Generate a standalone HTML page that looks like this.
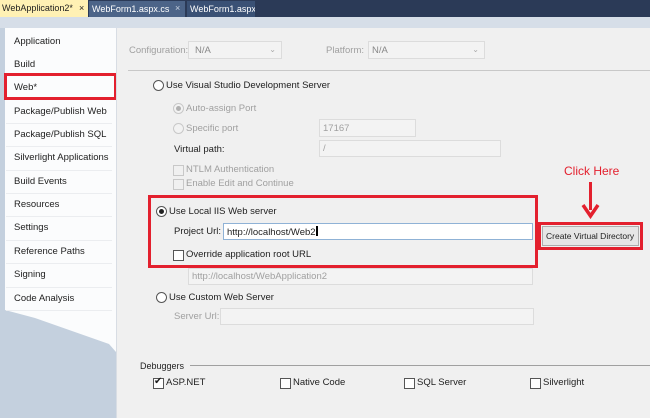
<!DOCTYPE html>
<html><head><meta charset="utf-8"><style>
*{margin:0;padding:0;box-sizing:border-box}
body{width:650px;height:418px;position:relative;overflow:hidden;background:#c4d0de;font-family:"Liberation Sans",sans-serif;font-size:9.5px;color:#1e1e1e}
.a{position:absolute;white-space:nowrap}
.g{color:#a0a0a0}
.box{position:absolute;background:#f3f3f3;border:1px solid #dcdcdc}
.rad{position:absolute;width:11px;height:11px;border-radius:50%;border:1px solid #555;background:#fff}
.rad.d{border-color:#c8c8c8;background:#f2f2f2}
.rad.on::after{content:"";position:absolute;left:2px;top:2px;width:5px;height:5px;border-radius:50%;background:#222}
.rad.d.on::after{background:#b0b0b0}
.chk{position:absolute;width:11px;height:11px;border:1px solid #555;background:#fff}
.chk.d{border-color:#c8c8c8;background:#f0f0f0}
.red{position:absolute;border:3px solid #e3202e}
.side div{position:absolute;left:14px;font-size:9.5px;color:#222}
.sep{position:absolute;left:6px;width:106px;height:1px;background:#ebedf0}
.tab{position:absolute;top:1px;height:16px;font-size:9px;overflow:hidden;padding-top:3px}
</style></head><body>
<div class="a" style="left:0;top:0;width:650px;height:17px;background:#2b3a57"></div>
<div class="tab" style="left:0;top:0;height:17px;width:88px;background:#fff1b4;color:#1e1e1e;padding-left:2px">WebApplication2*<span class="a" style="left:79px;top:3px">×</span></div>
<div class="tab" style="left:89px;width:96px;background:#4c6488;color:#fff;padding-left:3px">WebForm1.aspx.cs<span class="a" style="left:86px;top:2px;color:#c8d2e0">×</span></div>
<div class="tab" style="left:187px;width:68px;background:#3a5175;color:#fff;padding-left:3px">WebForm1.aspx</div>
<div class="a" style="left:0;top:17px;width:650px;height:11px;background:#d6dee8"></div>
<svg class="a" style="left:5px;top:28px" width="112" height="340"><polygon points="0,0 111,0 111,324 104,316 30,290 0,282" fill="#fbfcfd"/></svg>
<div class="side">
<div style="top:36px">Application</div>
<div style="top:59px">Build</div>
<div style="top:82px">Web*</div>
<div style="top:106px">Package/Publish Web</div>
<div style="top:129px">Package/Publish SQL</div>
<div style="top:152px">Silverlight Applications</div>
<div style="top:176px">Build Events</div>
<div style="top:199px">Resources</div>
<div style="top:222px">Settings</div>
<div style="top:246px">Reference Paths</div>
<div style="top:269px">Signing</div>
<div style="top:293px">Code Analysis</div>
</div>
<div class="sep" style="top:123px"></div><div class="sep" style="top:146px"></div><div class="sep" style="top:170px"></div><div class="sep" style="top:193px"></div><div class="sep" style="top:216px"></div><div class="sep" style="top:240px"></div><div class="sep" style="top:263px"></div><div class="sep" style="top:287px"></div><div class="sep" style="top:310px"></div>
<div class="red" style="left:4px;top:73px;width:113px;height:27px"></div>
<div class="a" style="left:116px;top:28px;width:534px;height:390px;background:#f0f0f0;border-left:1px solid #d8dde4"></div>
<div class="a g" style="left:129px;top:45px">Configuration:</div>
<div class="box" style="left:188px;top:41px;width:94px;height:18px"><span class="a" style="left:6px;top:3px;color:#888">N/A</span><span class="a" style="right:5px;top:3px;color:#aaa;font-size:8px">⌄</span></div>
<div class="a g" style="left:326px;top:45px">Platform:</div>
<div class="box" style="left:368px;top:41px;width:117px;height:18px"><span class="a" style="left:3px;top:3px;color:#888">N/A</span><span class="a" style="right:5px;top:3px;color:#aaa;font-size:8px">⌄</span></div>
<div class="a" style="left:128px;top:70px;width:522px;height:1px;background:#c8c8c8"></div>
<div class="rad" style="left:153px;top:80px"></div><div class="a" style="left:166px;top:80px">Use Visual Studio Development Server</div>
<div class="rad d on" style="left:173px;top:103px"></div><div class="a g" style="left:186px;top:103px">Auto-assign Port</div>
<div class="rad d" style="left:173px;top:123px"></div><div class="a g" style="left:186px;top:123px">Specific port</div>
<div class="box" style="left:319px;top:119px;width:97px;height:18px"><span class="a g" style="left:3px;top:3px">17167</span></div>
<div class="a" style="left:174px;top:144px">Virtual path:</div>
<div class="box" style="left:319px;top:140px;width:182px;height:17px"><span class="a g" style="left:3px;top:2px">/</span></div>
<div class="chk d" style="left:173px;top:165px"></div><div class="a g" style="left:186px;top:164px">NTLM Authentication</div>
<div class="chk d" style="left:173px;top:179px"></div><div class="a g" style="left:186px;top:178px">Enable Edit and Continue</div>
<div class="red" style="left:148px;top:195px;width:390px;height:73px"></div>
<div class="rad on" style="left:156px;top:206px"></div><div class="a" style="left:169px;top:206px">Use Local IIS Web server</div>
<div class="a" style="left:174px;top:226px">Project Url:</div>
<div class="a" style="left:223px;top:223px;width:310px;height:17px;background:#fff;border:1px solid #8fb2d6"><span class="a" style="left:3px;top:2px">http://localhost/Web2<span style="display:inline-block;width:2px;height:10px;background:#000;vertical-align:-1px"></span></span></div>
<div class="chk" style="left:173px;top:250px"></div><div class="a" style="left:186px;top:249px">Override application root URL</div>
<div class="box" style="left:188px;top:268px;width:345px;height:17px"><span class="a g" style="left:3px;top:2px">http://localhost/WebApplication2</span></div>
<div class="rad" style="left:156px;top:292px"></div><div class="a" style="left:169px;top:292px">Use Custom Web Server</div>
<div class="a g" style="left:174px;top:311px">Server Url:</div>
<div class="box" style="left:220px;top:308px;width:314px;height:17px"></div>
<div class="a" style="left:564px;top:164px;color:#e3202e;font-size:12px">Click Here</div>
<div class="a" style="left:589px;top:182px;width:3px;height:28px;background:#e3202e"></div>
<svg class="a" style="left:581px;top:203px" width="19" height="16"><path d="M2 2 L9.5 13 L17 2" stroke="#e3202e" stroke-width="3.5" fill="none"/></svg>
<div class="red" style="left:538px;top:222px;width:105px;height:28px"></div>
<div class="a" style="left:542px;top:226px;width:97px;height:20px;background:#e6e6e6;border:1px solid #acacac;padding:4px 0 0 3px;font-size:8.5px">Create Virtual Directory</div>
<div class="a" style="left:140px;top:361px;font-size:9px">Debuggers</div>
<div class="a" style="left:190px;top:365px;width:460px;height:1px;background:#a0a0a0"></div>
<div class="chk" style="left:153px;top:378px"><span class="a" style="left:0;top:-3px;font-size:10px">✔</span></div><div class="a" style="left:166px;top:377px">ASP.NET</div>
<div class="chk" style="left:280px;top:378px"></div><div class="a" style="left:293px;top:377px">Native Code</div>
<div class="chk" style="left:404px;top:378px"></div><div class="a" style="left:417px;top:377px">SQL Server</div>
<div class="chk" style="left:530px;top:378px"></div><div class="a" style="left:543px;top:377px">Silverlight</div>
</body></html>
